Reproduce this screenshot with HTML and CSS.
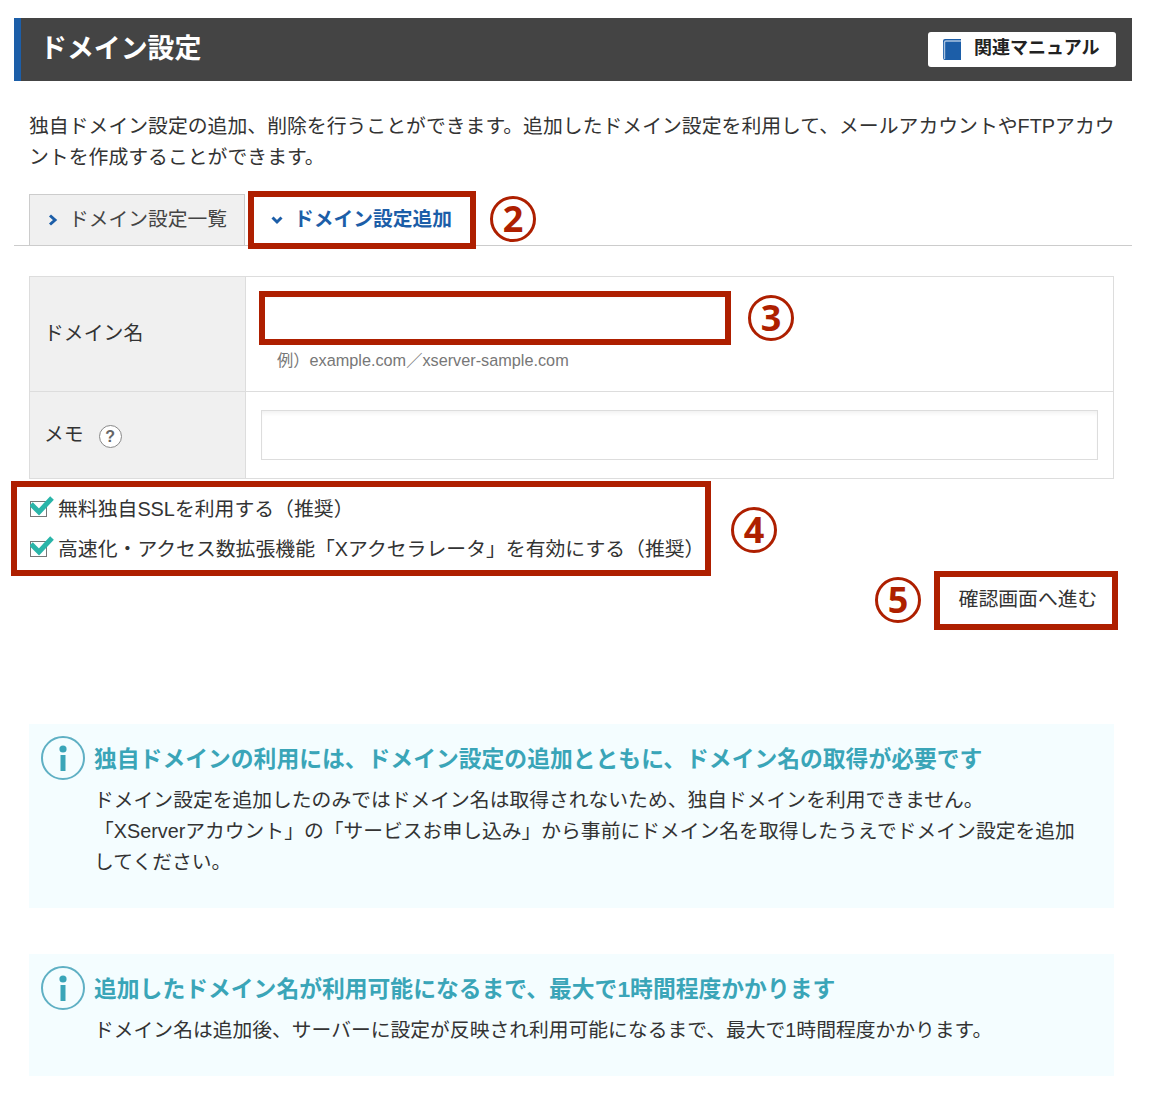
FILE: index.html
```html
<!DOCTYPE html>
<html lang="ja">
<head>
<meta charset="utf-8">
<title>ドメイン設定</title>
<link rel="stylesheet" href="styles.css">
</head>
<body>
<div class="page">
  <header class="head">
    <h1 class="head-title">ドメイン設定</h1>
    <a class="manual">
      <svg class="manual-icon" width="18" height="21" viewBox="0 0 18 21"><path d="M2 0H18V21H2Q0 21 0 19V2Q0 0 2 0Z" fill="#1c5ea8"/><path d="M1.5 20V3.5Q1.5 2 3 2H18" fill="none" stroke="#a9c3e0" stroke-width="1.4"/></svg>
      <span>関連マニュアル</span>
    </a>
  </header>

  <p class="intro">独自ドメイン設定の追加、削除を行うことができます。追加したドメイン設定を利用して、メールアカウントやFTPアカウントを作成することができます。</p>

  <nav class="tabs">
    <a class="tab tab-off">
      <svg width="10" height="12" viewBox="0 0 10 12"><path d="M2 1.5L7 6L2 10.5" fill="none" stroke="#1c5ea8" stroke-width="3"/></svg>
      <span>ドメイン設定一覧</span>
    </a>
    <a class="tab tab-on">
      <svg width="12" height="10" viewBox="0 0 12 10"><path d="M1.5 2.5L6 7L10.5 2.5" fill="none" stroke="#1c5ea8" stroke-width="3"/></svg>
      <span>ドメイン設定追加</span>
    </a>
  </nav>

  <table class="form">
    <tr class="row-domain">
      <th>ドメイン名</th>
      <td>
        <input class="field field-domain" type="text">
        <div class="hint">例）example.com／xserver-sample.com</div>
      </td>
    </tr>
    <tr class="row-memo">
      <th><span class="memo-label">メモ<span class="help">?</span></span></th>
      <td><input class="field field-memo" type="text"></td>
    </tr>
  </table>

  <div class="options">
    <label class="option">
      <svg width="24" height="22" viewBox="0 0 24 22"><rect x="0.5" y="5.5" width="16" height="15" fill="#fff" stroke="#777"/><path d="M1 8L9 16L22 2" fill="none" stroke="#2ab5a9" stroke-width="5"/></svg>
      <span>無料独自SSLを利用する（推奨）</span>
    </label>
    <label class="option">
      <svg width="24" height="22" viewBox="0 0 24 22"><rect x="0.5" y="5.5" width="16" height="15" fill="#fff" stroke="#777"/><path d="M1 8L9 16L22 2" fill="none" stroke="#2ab5a9" stroke-width="5"/></svg>
      <span>高速化・アクセス数拡張機能「Xアクセラレータ」を有効にする（推奨）</span>
    </label>
  </div>

  <div class="actions">
    <button class="next" type="button">確認画面へ進む</button>
  </div>

  <section class="info info-first">
    <svg class="info-icon" width="44" height="44" viewBox="0 0 44 44"><circle cx="22" cy="22" r="21" fill="none" stroke="#5fb0c4" stroke-width="2"/><circle cx="22" cy="13" r="3.6" fill="#3aa5b8"/><rect x="19.5" y="19" width="5" height="16" fill="#3aa5b8"/></svg>
    <div class="info-main">
      <h2 class="info-title">独自ドメインの利用には、ドメイン設定の追加とともに、ドメイン名の取得が必要です</h2>
      <p class="info-text">ドメイン設定を追加したのみではドメイン名は取得されないため、独自ドメインを利用できません。<br>「XServerアカウント」の「サービスお申し込み」から事前にドメイン名を取得したうえでドメイン設定を追加してください。</p>
    </div>
  </section>

  <section class="info">
    <svg class="info-icon" width="44" height="44" viewBox="0 0 44 44"><circle cx="22" cy="22" r="21" fill="none" stroke="#5fb0c4" stroke-width="2"/><circle cx="22" cy="13" r="3.6" fill="#3aa5b8"/><rect x="19.5" y="19" width="5" height="16" fill="#3aa5b8"/></svg>
    <div class="info-main">
      <h2 class="info-title">追加したドメイン名が利用可能になるまで、最大で1時間程度かかります</h2>
      <p class="info-text">ドメイン名は追加後、サーバーに設定が反映され利用可能になるまで、最大で1時間程度かかります。</p>
    </div>
  </section>

  <div class="mark mark-tab"></div>
  <div class="mark mark-input"></div>
  <div class="mark mark-options"></div>
  <div class="mark mark-button"></div>
  <div class="num num-2">2</div>
  <div class="num num-3">3</div>
  <div class="num num-4">4</div>
  <div class="num num-5">5</div>
</div>
</body>
</html>
```
FILE: styles.css
```css
* { box-sizing: border-box; }
html, body { margin: 0; padding: 0; background: #fff; }
body {
  font-family: "Liberation Sans", "Noto Sans CJK JP", sans-serif;
  font-size: 19.85px;
  line-height: 24px;
  color: #333;
}
.page {
  position: relative;
  width: 1150px;
  height: 1094px;
  padding: 18px 18px 18px 14px;
}
.head {
  display: flex;
  align-items: center;
  justify-content: space-between;
  height: 63px;
  padding: 0 16px 0 19px;
  background: #444;
  border-left: 7px solid #1c5ea8;
}
.head-title {
  margin: 0;
  padding-bottom: 2px;
  font-size: 26.9px;
  line-height: 32px;
  font-weight: 700;
  color: #fff;
}
.manual {
  display: flex;
  align-items: center;
  gap: 13px;
  width: 188px;
  height: 35px;
  padding-left: 15px;
  background: #fff;
  border-radius: 3px;
  font-size: 18px;
  font-weight: 700;
  color: #222;
}
.manual span { padding-bottom: 3px; }
.intro {
  margin: 30px 15px 0;
  line-height: 31px;
  width: 1086px;
}
.tabs {
  display: flex;
  height: 52px;
  margin-top: 21px;
  padding-left: 15px;
  border-bottom: 1px solid #ccc;
}
.tab {
  display: flex;
  align-items: center;
  height: 51px;
  font-size: 19.75px;
  color: #444;
}
.tab span { padding-bottom: 2px; }
.tab-off {
  width: 216px;
  padding-left: 18px;
  gap: 11px;
  background: #f0f0f0;
  border: 1px solid #ccc;
  border-bottom: 0;
}
.tab-on {
  padding-left: 26px;
  gap: 11px;
  font-weight: 700;
  color: #1c5ea8;
}
.form {
  width: 1085px;
  margin: 30px 0 0 15px;
  border-collapse: collapse;
  table-layout: fixed;
}
.form th, .form td { border: 1px solid #ddd; padding: 0; }
.form th {
  width: 216px;
  padding: 0 0 2px 14px;
  background: #f0f0f0;
  font-weight: 400;
  text-align: left;
}
.row-domain { height: 115px; }
.row-memo { height: 87px; }
.form td { padding: 0 15px; vertical-align: top; }
.field {
  display: block;
  height: 50px;
  border: 1px solid #ddd;
  background: #fff;
  box-shadow: inset 0 4px 4px -2px #f0f0f0;
}
.field-domain { width: 468px; margin-top: 16px; }
.field-memo { width: 837px; margin-top: 18px; }
.hint {
  margin: 5px 0 0 16px;
  font-size: 16.25px;
  line-height: 24px;
  color: #777;
}
.memo-label { display: flex; align-items: center; gap: 15px; }
.help {
  display: flex;
  align-items: center;
  justify-content: center;
  width: 23px;
  height: 23px;
  margin-top: 5px;
  border: 1px solid #888;
  border-radius: 50%;
  background: #fff;
  font-size: 16px;
  font-weight: 700;
  color: #666;
}
.options { margin: 10px 0 0 16px; }
.option {
  display: flex;
  align-items: center;
  height: 40px;
  gap: 4px;
}
.option svg { margin-top: -4px; }
.actions {
  display: flex;
  justify-content: flex-end;
  margin: 8px 20px 0 0;
}
.next {
  width: 172px;
  height: 47px;
  padding: 0 0 4px 4px;
  border: 0;
  background: #fff;
  box-shadow: 0 1px 6px rgba(0, 0, 0, 0.18);
  font: inherit;
  color: #333;
}
.info {
  display: flex;
  gap: 9px;
  margin: 46px 0 0 15px;
  width: 1085px;
  padding: 12px 30px 30px 12px;
  background: #f4fdff;
}
.info-first { margin-top: 100px; }
.info-icon { flex: none; }
.info-title {
  margin: 0;
  padding-top: 1px;
  font-size: 22.8px;
  line-height: 44px;
  font-weight: 700;
  color: #3aa5b8;
}
.info-text {
  margin: 4px 0 0;
  font-size: 19.8px;
  line-height: 31px;
}
.mark {
  position: absolute;
  border: 6px solid #ae1f00;
}
.mark-tab { left: 248px; top: 191px; width: 228px; height: 58px; }
.mark-input { left: 259px; top: 291px; width: 472px; height: 54px; }
.mark-options { left: 11px; top: 481px; width: 700px; height: 95px; }
.mark-button { left: 934px; top: 571px; width: 184px; height: 59px; }
.num {
  position: absolute;
  display: flex;
  align-items: center;
  justify-content: center;
  width: 46px;
  height: 46px;
  border: 3px solid #ae1f00;
  border-radius: 50%;
  font-family: "Noto Sans", sans-serif;
  font-size: 36px;
  line-height: 1;
  font-weight: 700;
  color: #ae1f00;
}
.num-2 { left: 490px; top: 196px; }
.num-3 { left: 748px; top: 295px; }
.num-4 { left: 731px; top: 507px; }
.num-5 { left: 875px; top: 577px; }
```
